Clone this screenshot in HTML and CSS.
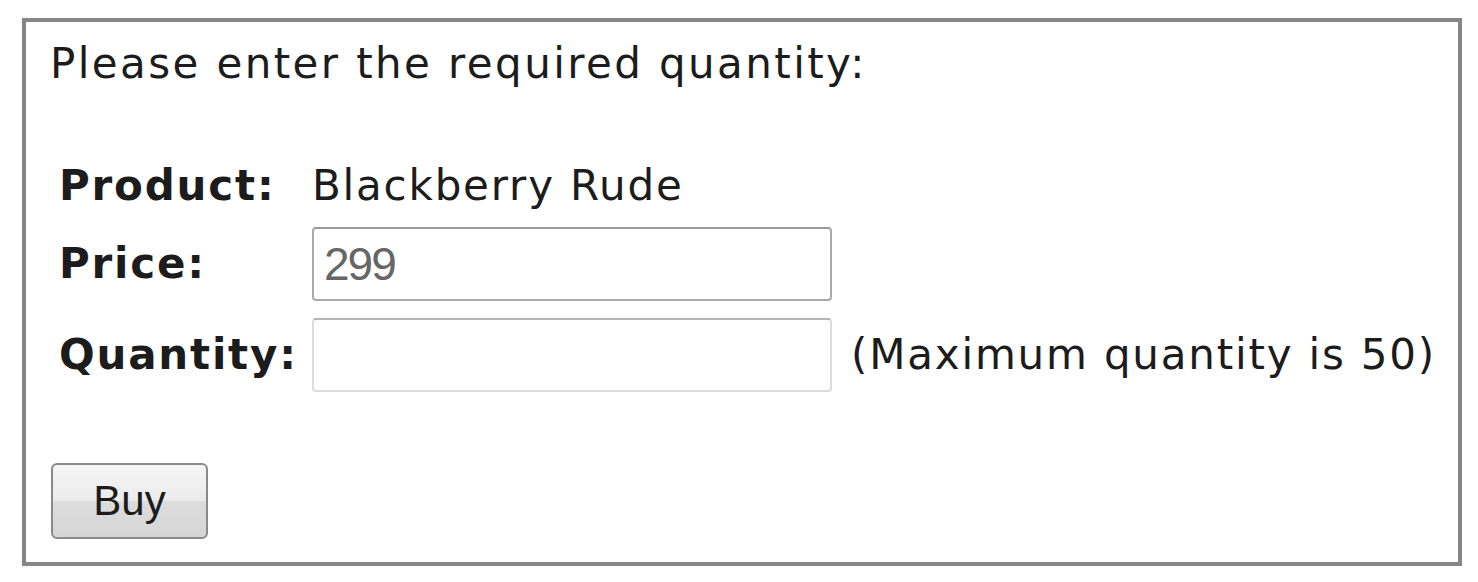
FILE: index.html
```html
<!DOCTYPE html>
<html>
<head>
<meta charset="utf-8">
<link rel="stylesheet" href="styles.css">
</head>
<body>
<div class="frame">
  <p class="intro">Please enter the required quantity:</p>
  <div class="form">
    <div class="label">Product:</div>
    <div class="value">Blackberry Rude</div>
    <div class="note"></div>
    <div class="label">Price:</div>
    <div class="field"><span class="input price">299</span></div>
    <div class="note"></div>
    <div class="label">Quantity:</div>
    <div class="field"><span class="input qty"></span></div>
    <div class="note">(Maximum quantity is 50)</div>
  </div>
  <button class="buy">Buy</button>
</div>
</body>
</html>
```
FILE: styles.css
```css
html, body {
  margin: 0;
  padding: 0;
  background: #ffffff;
}
body {
  width: 1478px;
  height: 582px;
  overflow: hidden;
}
.frame {
  box-sizing: border-box;
  margin: 18px 0 0 22px;
  width: 1440px;
  height: 548px;
  border: 4px solid #868686;
  padding: 18px 0 0 24px;
  font-family: "DejaVu Sans", Verdana, sans-serif;
  font-size: 42px;
  letter-spacing: 1.8px;
  color: #1c1c1c;
}
.intro {
  margin: 0;
  line-height: 48px;
  letter-spacing: 2.4px;
}
.form {
  display: grid;
  grid-template-columns: 234px 520px auto;
  column-gap: 19px;
  row-gap: 17px;
  margin: 74px 0 0 9px;
  align-items: center;
}
.label {
  font-weight: bold;
  line-height: 48px;
}
.value {
  line-height: 48px;
}
.input {
  display: flex;
  align-items: center;
  box-sizing: border-box;
  width: 520px;
  height: 74px;
  border-radius: 4px;
  padding-left: 10px;
  font-family: "Liberation Sans", Arial, sans-serif;
  font-size: 46px;
  letter-spacing: -2px;
  color: #666666;
  background: #fff;
}
.price {
  border: 2px solid #a9a9a9;
  border-top-color: #9a9a9a;
}
.qty {
  border: 2px solid #dcdcdc;
  border-top-color: #b4b4b4;
}
.note {
  line-height: 48px;
}
.buy {
  display: block;
  box-sizing: border-box;
  margin: 71px 0 0 1px;
  width: 157px;
  height: 76px;
  border: 2px solid #8a8a8a;
  border-radius: 6px;
  background: linear-gradient(#f5f5f5 0%, #ececec 48%, #dcdcdc 52%, #d6d6d6 100%);
  font-family: "Liberation Sans", Arial, sans-serif;
  font-size: 42px;
  color: #1c1c1c;
  padding: 0;
}
```
